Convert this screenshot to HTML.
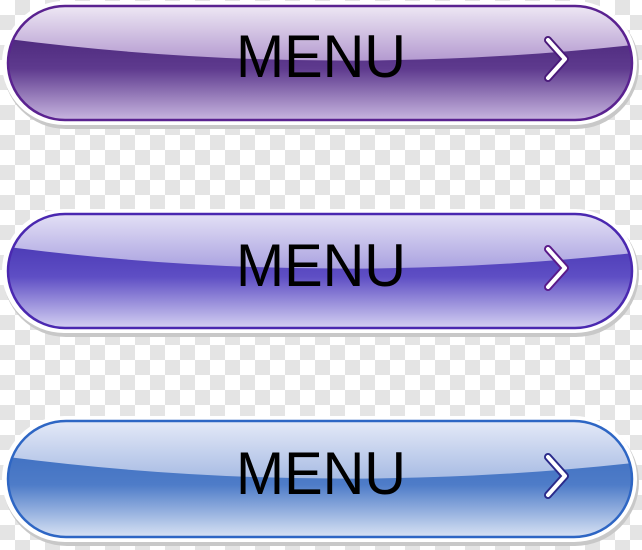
<!DOCTYPE html>
<html><head><style>
html,body{margin:0;padding:0}
body{width:642px;height:550px;overflow:hidden;background-color:#fff;
background-image:linear-gradient(45deg,#e4e4e4 25%,transparent 25%,transparent 75%,#e4e4e4 75%),linear-gradient(45deg,#e4e4e4 25%,transparent 25%,transparent 75%,#e4e4e4 75%);
background-size:30px 30px;background-position:0 0,15px 15px;}
svg{position:absolute;left:0;top:0}
</style></head><body>
<svg width="642" height="550" viewBox="0 0 642 550">
<defs>
<linearGradient id="b1" x1="0" y1="0" x2="0" y2="1">
<stop offset="0" stop-color="#3e1a6e"/><stop offset="0.55" stop-color="#5e3a8e"/><stop offset="1" stop-color="#c8b6e0"/></linearGradient>
<linearGradient id="g1" x1="0" y1="0" x2="0" y2="1">
<stop offset="0" stop-color="#f4f0f8"/><stop offset="1" stop-color="#b49ad0"/></linearGradient>
<linearGradient id="b2" x1="0" y1="0" x2="0" y2="1">
<stop offset="0" stop-color="#3a28a8"/><stop offset="0.55" stop-color="#5e4ec4"/><stop offset="1" stop-color="#d4d0f2"/></linearGradient>
<linearGradient id="g2" x1="0" y1="0" x2="0" y2="1">
<stop offset="0" stop-color="#f2f0fb"/><stop offset="1" stop-color="#aaa2e0"/></linearGradient>
<linearGradient id="b3" x1="0" y1="0" x2="0" y2="1">
<stop offset="0" stop-color="#3466bc"/><stop offset="0.55" stop-color="#4e7cc8"/><stop offset="1" stop-color="#d8e2f4"/></linearGradient>
<linearGradient id="g3" x1="0" y1="0" x2="0" y2="1">
<stop offset="0" stop-color="#f0f2fb"/><stop offset="1" stop-color="#a8bce4"/></linearGradient>
<clipPath id="c1"><rect x="8" y="6" width="624" height="114" rx="57"/></clipPath>
<clipPath id="c2"><rect x="8" y="214" width="624" height="114" rx="57"/></clipPath>
<clipPath id="c3"><rect x="8" y="421" width="624" height="116" rx="58"/></clipPath>
</defs>

<rect x="3" y="3" width="636" height="126" rx="63" fill="#c8c8c8"/>
<rect x="2" y="1" width="635" height="124" rx="62" fill="#fff"/>
<rect x="8" y="6" width="624" height="114" rx="57" fill="url(#b1)"/>
<path clip-path="url(#c1)" d="M0,0 H642 V44 Q320,80 0,38 Z" fill="url(#g1)"/>
<rect x="8" y="6" width="624" height="114" rx="57" fill="none" stroke="#5a2290" stroke-width="2.5"/>
<text x="321" y="77" text-anchor="middle" font-family="Liberation Sans, sans-serif" font-size="60" textLength="170" lengthAdjust="spacingAndGlyphs" fill="#000">MENU</text>
<polyline points="548,40 565,59 548,78" fill="none" stroke="#4a1a7a" stroke-width="8" stroke-linecap="round" stroke-linejoin="round"/>
<polyline points="548,40 565,59 548,78" fill="none" stroke="#fff" stroke-width="4" stroke-linecap="round" stroke-linejoin="round"/>

<rect x="3" y="211" width="636" height="126" rx="63" fill="#c8c8c8"/>
<rect x="2" y="209" width="635" height="124" rx="62" fill="#fff"/>
<rect x="8" y="214" width="624" height="114" rx="57" fill="url(#b2)"/>
<path clip-path="url(#c2)" d="M0,200 H642 V252 Q320,288 0,246 Z" fill="url(#g2)"/>
<rect x="8" y="214" width="624" height="114" rx="57" fill="none" stroke="#4a28b0" stroke-width="2.5"/>
<text x="321" y="286" text-anchor="middle" font-family="Liberation Sans, sans-serif" font-size="60" textLength="170" lengthAdjust="spacingAndGlyphs" fill="#000">MENU</text>
<polyline points="548,249 565,268 548,287" fill="none" stroke="#5a1a8a" stroke-width="8" stroke-linecap="round" stroke-linejoin="round"/>
<polyline points="548,249 565,268 548,287" fill="none" stroke="#fff" stroke-width="4" stroke-linecap="round" stroke-linejoin="round"/>

<rect x="3" y="418" width="636" height="128" rx="64" fill="#c8c8c8"/>
<rect x="2" y="416" width="635" height="126" rx="63" fill="#fff"/>
<rect x="8" y="421" width="624" height="116" rx="58" fill="url(#b3)"/>
<path clip-path="url(#c3)" d="M0,410 H642 V462 Q320,498 0,456 Z" fill="url(#g3)"/>
<rect x="8" y="421" width="624" height="116" rx="58" fill="none" stroke="#2e66c4" stroke-width="2.5"/>
<text x="321" y="494" text-anchor="middle" font-family="Liberation Sans, sans-serif" font-size="60" textLength="170" lengthAdjust="spacingAndGlyphs" fill="#000">MENU</text>
<polyline points="548,457 565,476 548,495" fill="none" stroke="#2a2a8a" stroke-width="8" stroke-linecap="round" stroke-linejoin="round"/>
<polyline points="548,457 565,476 548,495" fill="none" stroke="#fff" stroke-width="4" stroke-linecap="round" stroke-linejoin="round"/>
</svg>
</body></html>
